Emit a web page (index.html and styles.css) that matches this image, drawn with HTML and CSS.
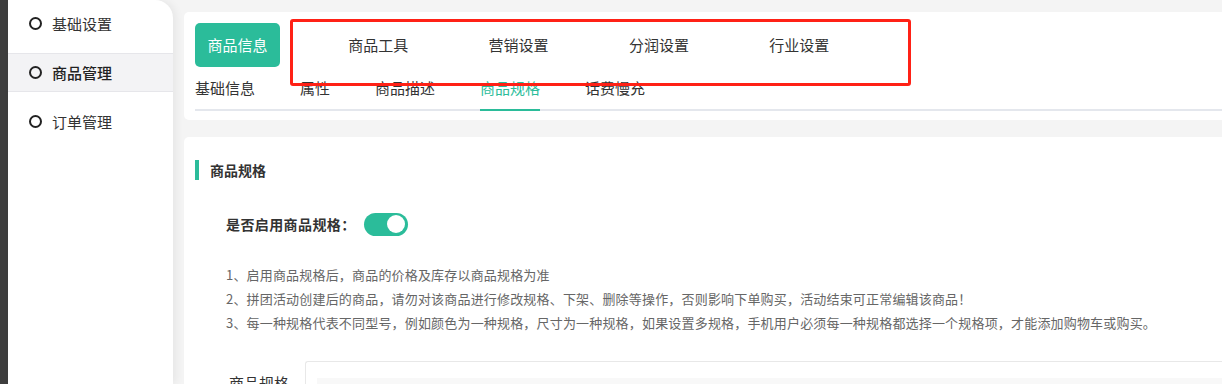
FILE: index.html
```html
<!DOCTYPE html>
<html lang="zh-CN">
<head>
<meta charset="utf-8">
<title>商品规格</title>
<link rel="stylesheet" href="styles.css">
</head>
<body>
<div class="app">
  <div class="edge"></div>
  <aside class="sidebar">
    <div class="nav-item"><span class="dot"></span><span>基础设置</span></div>
    <div class="nav-item active"><span class="dot"></span><span>商品管理</span></div>
    <div class="nav-item"><span class="dot"></span><span>订单管理</span></div>
  </aside>
  <main class="main">
    <section class="card tabs-card">
      <div class="top-tabs">
        <div class="top-tab primary">商品信息</div>
        <div class="top-tab">商品工具</div>
        <div class="top-tab">营销设置</div>
        <div class="top-tab">分润设置</div>
        <div class="top-tab">行业设置</div>
      </div>
      <div class="sub-tabs">
        <div class="sub-tab">基础信息</div>
        <div class="sub-tab">属性</div>
        <div class="sub-tab">商品描述</div>
        <div class="sub-tab current">商品规格</div>
        <div class="sub-tab">话费慢充</div>
      </div>
      <div class="highlight"></div>
    </section>
    <section class="card spec-card">
      <h3 class="sec-title">商品规格</h3>
      <div class="switch-row">
        <span class="switch-label">是否启用商品规格：</span>
        <span class="switch"><span class="knob"></span></span>
      </div>
      <ol class="notes">
        <li>1、启用商品规格后，商品的价格及库存以商品规格为准</li>
        <li>2、拼团活动创建后的商品，请勿对该商品进行修改规格、下架、删除等操作，否则影响下单购买，活动结束可正常编辑该商品！</li>
        <li>3、每一种规格代表不同型号，例如颜色为一种规格，尺寸为一种规格，如果设置多规格，手机用户必须每一种规格都选择一个规格项，才能添加购物车或购买。</li>
      </ol>
      <div class="field-row">
        <label class="field-label">商品规格</label>
        <div class="field-box"><div class="field-inner"></div></div>
      </div>
    </section>
  </main>
</div>
</body>
</html>
```

FILE: styles.css
```css
* { box-sizing: border-box; }
html, body { margin: 0; padding: 0; }
body {
  background: #f4f4f4;
  font-family: "Noto Sans CJK SC", "Noto Sans", sans-serif;
  color: #333;
  overflow: hidden;
  height: 384px;
}
.app {
  display: flex;
  height: 384px;
}
.edge {
  width: 8px;
  flex: none;
  background: #3e3e3e;
}
.sidebar {
  width: 165px;
  flex: none;
  background: #fff;
  border-top-right-radius: 18px;
  box-shadow: 3px 0 8px rgba(0,0,0,0.06);
  padding-top: 4px;
  display: flex;
  flex-direction: column;
  gap: 10px;
  position: relative;
  z-index: 1;
}
.nav-item {
  height: 39px;
  display: flex;
  align-items: center;
  padding-left: 21px;
  font-size: 15px;
  color: #333;
  gap: 10px;
  border-top: 1px solid transparent;
  border-bottom: 1px solid transparent;
}
.nav-item.active {
  background: #f3f3f5;
  border-top-color: #e6e6ea;
  border-bottom-color: #e6e6ea;
  font-weight: 500;
  color: #222;
}
.dot {
  width: 13px;
  height: 13px;
  border: 2px solid #222;
  border-radius: 50%;
  flex: none;
}
.main {
  flex: 1;
  padding: 12px 0 0 11px;
  min-width: 0;
}
.card {
  background: #fff;
  border-radius: 5px 0 0 5px;
}
.tabs-card {
  position: relative;
  padding: 11px 0 9px 11px;
  height: 108px;
}
.top-tabs {
  display: flex;
  align-items: center;
  height: 44px;
}
.top-tab {
  width: 140.4px;
  text-align: center;
  font-size: 15px;
  color: #333;
  padding-top: 1px;
  margin-top: -2px;
}
.top-tab.primary {
  width: 85px;
  height: 44px;
  line-height: 44px;
  background: #2bbc9a;
  color: #fff;
  border-radius: 5px;
  margin-right: 28px;
  padding-top: 0;
  margin-top: 0;
}
.sub-tabs {
  display: flex;
  gap: 45px;
  border-bottom: 2px solid #e4e7ed;
  height: 44px;
  align-items: stretch;
}
.sub-tab {
  font-size: 15px;
  color: #333;
  padding-top: 11px;
  border-bottom: 2px solid transparent;
  margin-bottom: -2px;
  line-height: 20px;
}
.sub-tab.current {
  color: #2bbc9a;
  border-bottom-color: #2bbc9a;
}
.highlight {
  position: absolute;
  left: 106px;
  top: 7px;
  width: 621px;
  height: 67px;
  border: 3px solid #ff2116;
  border-radius: 3px;
}
.spec-card {
  margin-top: 17px;
  padding: 23px 0 0 11px;
  height: 260px;
}
.sec-title {
  margin: 0;
  height: 20px;
  border-left: 4px solid #2bbc9a;
  padding-left: 11px;
  font-size: 14px;
  font-weight: 700;
  line-height: 20px;
  color: #333;
}
.switch-row {
  display: flex;
  align-items: center;
  margin: 32px 0 0 31px;
  height: 24px;
}
.switch-label {
  font-size: 14px;
  font-weight: 700;
  color: #333;
  letter-spacing: 0.4px;
  margin-right: 8px;
}
.switch {
  width: 44px;
  height: 23px;
  border-radius: 12px;
  background: #2bbc9a;
  display: flex;
  align-items: center;
  justify-content: flex-end;
  padding-right: 3px;
}
.knob {
  width: 18px;
  height: 18px;
  border-radius: 50%;
  background: #fff;
}
.notes {
  list-style: none;
  margin: 27px 0 0 31px;
  padding: 0;
  font-size: 13px;
  color: #666;
  line-height: 24px;
  letter-spacing: 0.18px;
}
.field-row {
  display: flex;
  align-items: flex-start;
  margin-top: 26px;
}
.field-label {
  width: 110px;
  flex: none;
  text-align: right;
  padding-right: 16px;
  font-size: 15px;
  color: #333;
  padding-top: 11px;
}
.field-box {
  flex: 1;
  height: 60px;
  border: 1px solid #e8e8e8;
  border-right: none;
  border-radius: 3px 0 0 0;
  padding: 16px 0 0 11px;
}
.field-inner {
  height: 40px;
  background: #f8f8f8;
}
```
